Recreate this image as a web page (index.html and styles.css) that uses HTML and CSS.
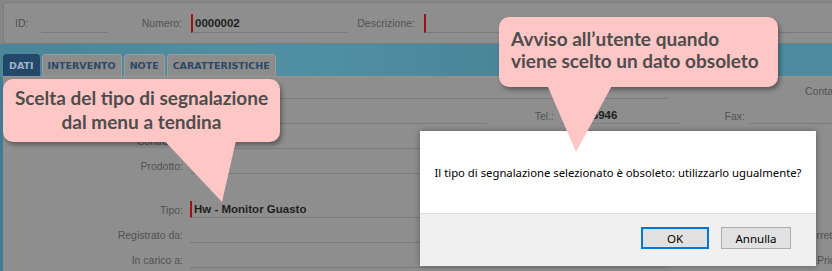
FILE: index.html
```html
<!DOCTYPE html>
<html lang="it">
<head>
<meta charset="utf-8">
<title>Segnalazione</title>
<link rel="stylesheet" href="styles.css">
</head>
<body>
<div class="screen">
  <div class="top">
    <div class="toppanel">
      <span class="lbl l-id">ID:</span><span class="fld f-id"></span>
      <span class="lbl l-num">Numero:</span><span class="fld req f-num">0000002</span>
      <span class="lbl l-desc">Descrizione:</span><span class="fld req f-desc"></span>
    </div>
  </div>
  <div class="tabband">
    <div class="tab active">DATI</div>
    <div class="tab">INTERVENTO</div>
    <div class="tab">NOTE</div>
    <div class="tab">CARATTERISTICHE</div>
  </div>
  <div class="content">
    <div class="row">
      <span class="lbl lcol"></span>
      <span class="fld f-wide combo"><span class="arrow"></span></span>
      <span class="lbl r-conta">Contatto:</span>
    </div>
    <div class="row">
      <span class="lbl lcol"></span>
      <span class="fld f-sede"></span>
      <span class="lbl r-tel">Tel.:</span>
      <span class="fld f-tel">0161 5946</span>
      <span class="lbl r-fax">Fax:</span>
      <span class="fld f-fax"></span>
    </div>
    <div class="row">
      <span class="lbl lcol">Contratto:</span>
      <span class="fld f-wide"></span>
    </div>
    <div class="row">
      <span class="lbl lcol">Prodotto:</span>
      <span class="fld f-wide"></span>
    </div>
    <div class="spacer"></div>
    <div class="row">
      <span class="lbl lcol">Tipo:</span>
      <span class="fld req f-wide">Hw - Monitor Guasto</span>
    </div>
    <div class="row">
      <span class="lbl lcol">Registrato da:</span>
      <span class="fld f-wide"></span>
      <span class="lbl r-corr">Correttivo:</span>
    </div>
    <div class="row">
      <span class="lbl lcol">In carico a:</span>
      <span class="fld f-wide"></span>
      <span class="lbl r-prio">Priorità:</span>
    </div>
  </div>

  <div class="dialog">
    <div class="dlg-body">Il tipo di segnalazione selezionato è obsoleto: utilizzarlo ugualmente?</div>
    <div class="dlg-foot">
      <button class="btn btn-ok">OK</button>
      <button class="btn">Annulla</button>
    </div>
  </div>

  <div class="callout c1">Scelta del tipo di segnalazione<br>dal menu a tendina</div>
  <div class="callout c2">Avviso all’utente quando<br>viene scelto un dato obsoleto</div>
  <svg class="tails" width="832" height="271" viewBox="0 0 832 271">
    <polygon points="160,136 237,136 222,202" fill="#ffc6c6"/>
    <polygon points="545,80 615,80 576,152" fill="#ffc6c6"/>
  </svg>
</div>
</body>
</html>
```
FILE: styles.css
```css
* { box-sizing: border-box; }
html, body { margin: 0; padding: 0; }
body {
  width: 832px;
  height: 271px;
  overflow: hidden;
  background: #8c8c8c;
  font-family: "Liberation Sans", Arial, sans-serif;
}
.screen {
  position: relative;
  width: 832px;
  height: 271px;
  overflow: hidden;
  background: #8d8d8d;
}
.top {
  height: 44px;
  padding: 2px 0 0 3px;
  background: #868686;
}
.toppanel {
  height: 42px;
  display: flex;
  align-items: center;
  padding-left: 11px;
  background: #8e8e8e;
  border: 1px solid #7c7c7c;
  border-right: none;
  border-radius: 4px 0 0 4px;
}
.toppanel > *, .row > * { flex-shrink: 0; }
.lbl {
  font-size: 10.5px;
  color: #525252;
  white-space: nowrap;
}
.fld {
  display: flex;
  align-items: center;
  height: 19px;
  border-bottom: 1px solid #7a7a7a;
  font-size: 11.5px;
  font-weight: bold;
  color: #1f1f1f;
  padding-left: 3px;
  white-space: nowrap;
}
.fld.req {
  border-left: 2px solid #a31212;
  padding-left: 2px;
}
.l-id { width: 26px; }
.f-id { width: 67px; }
.l-num { width: 74px; text-align: right; }
.f-num { width: 156px; margin-left: 9px; }
.l-desc { width: 68px; text-align: right; }
.toppanel .f-desc { flex: 1 0 auto; margin-left: 9px; }

.tabband {
  height: 32px;
  display: flex;
  align-items: flex-end;
  gap: 2px;
  padding-left: 3px;
  background: linear-gradient(90deg, #4a8599 0%, #5190a4 35%, #4a8598 60%, #4e8b9f 100%);
}
.tab {
  height: 22px;
  padding: 0 5px;
  display: flex;
  align-items: center;
  font-family: "DejaVu Sans", Verdana, sans-serif;
  font-size: 9.5px;
  font-weight: bold;
  color: #2c4966;
  background: #8c8c8c;
  border: 1px solid #9c9c9c;
  border-bottom: none;
  border-radius: 4px 4px 0 0;
}
.tab.active {
  background: #24486a;
  border-color: #24486a;
  color: #9fb2c4;
}

.content {
  height: 195px;
  border-left: 3px solid #3f7d92;
  border-top: 1px solid #959595;
  padding-top: 1px;
  background: #8e8e8e;
}
.row {
  height: 25px;
  display: flex;
  align-items: center;
}
.spacer { height: 19px; }
.lcol { width: 180px; text-align: right; }
.row .fld { margin-left: 7px; height: 17px; }
.f-wide { width: 477px; }
.combo { justify-content: flex-end; }
.arrow {
  width: 0; height: 0;
  border-left: 5px solid transparent;
  border-right: 5px solid transparent;
  border-top: 5px solid #4a4a4a;
  margin-top: -14px;
}
.r-conta { margin-left: 138px; }
.f-sede { width: 297px; }
.r-tel { width: 67px; text-align: right; }
.row .f-tel { width: 120px; margin-left: 6px; }
.r-fax { width: 65px; text-align: right; }
.row .f-fax { width: 90px; margin-left: 4px; }
.r-corr { margin-left: 136px; }
.r-prio { margin-left: 150px; }

.dialog {
  position: absolute;
  left: 420px;
  top: 131px;
  width: 396px;
  height: 135px;
  background: #ffffff;
  box-shadow: 0 0 6px rgba(0,0,0,0.35);
  display: flex;
  flex-direction: column;
}
.dlg-body {
  height: 82px;
  display: flex;
  align-items: center;
  justify-content: center;
  font-family: "Noto Sans", "Open Sans", sans-serif;
  font-size: 11.3px;
  color: #000;
  white-space: nowrap;
}
.dlg-foot {
  flex: 1;
  background: #f0f0f0;
  border-top: 1px solid #dfdfdf;
  display: flex;
  justify-content: flex-end;
  align-items: flex-start;
  gap: 12px;
  padding: 13px 25px 0 0;
}
.btn {
  width: 70px;
  height: 22px;
  background: #e1e1e1;
  border: 1px solid #adadad;
  font-family: "Noto Sans", "Open Sans", sans-serif;
  font-size: 11.5px;
  color: #000;
  padding: 0;
}
.btn-ok {
  width: 68px;
  border: 2px solid #0078d7;
}

.callout {
  position: absolute;
  background: #ffc6c6;
  border-radius: 10px;
  box-shadow: 2px 3px 4px rgba(0,0,0,0.35);
  font-family: Lato, "Open Sans", sans-serif;
  font-weight: bold;
  color: #4d4d4d;
  white-space: nowrap;
}
.c1 {
  left: 3px;
  top: 79px;
  width: 277px;
  height: 63px;
  padding-top: 7px;
  text-align: center;
  font-size: 19px;
  line-height: 24px;
}
.c2 {
  left: 499px;
  top: 17px;
  width: 279px;
  height: 70px;
  padding: 11px 0 0 12px;
  font-size: 19px;
  line-height: 22px;
}
.tails {
  position: absolute;
  left: 0;
  top: 0;
  pointer-events: none;
}
```
